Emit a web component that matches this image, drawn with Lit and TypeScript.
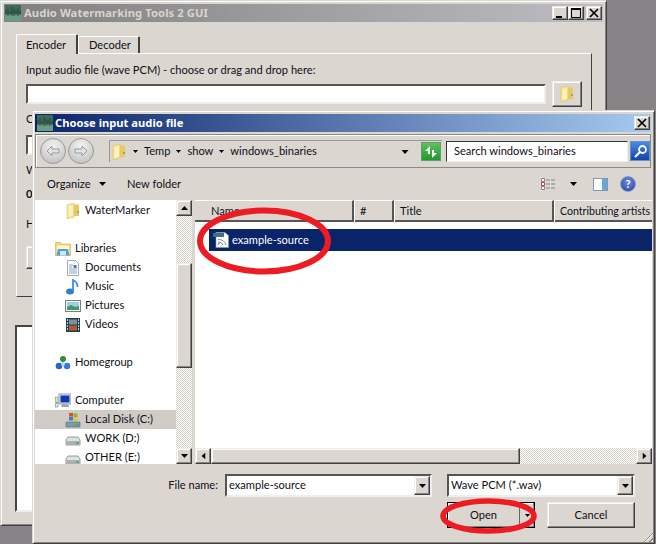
import { LitElement, html, css, svg } from "lit";
import { customElement } from "lit/decorators.js";

const folder = svg`<svg class="ic" viewBox="0 0 14 16"><path d="M1 1.500L8 0v14l-7 2z" fill="#f7e291" stroke="#d8bc60" stroke-width=".5"/><path d="M8 1.500h5V13H8z" fill="#e9c95f"/><path d="M2.500 3L7 2v10.500l-4.500 1.500z" fill="#fdf1bd"/><rect x="11.500" y="8" width="1.200" height="2" fill="#5a86b8"/></svg>`;
const libs = svg`<svg class="ic" viewBox="0 0 16 16"><path d="M.5 1.500h5l1 1.500h9v11.500H.5z" fill="#f2d676" stroke="#c7a94f" stroke-width=".6"/><path d="M2 4.500h12V14H2z" fill="#fff6cf"/><path d="M3 8h10l1.500 6.500h-13z" fill="#4f9fd8"/><path d="M5 10h6v4.500H5z" fill="#cfe6f6"/></svg>`;
const doc = svg`<svg class="ic" viewBox="0 0 16 16"><path d="M2.500.5h8l3 3v12h-11z" fill="#fff" stroke="#8a93a6" stroke-width=".8"/><path d="M4 5h4M4 7h3M4 9h8M4 11h8M4 13h8" stroke="#8fa0b8"/><rect x="8.500" y="5" width="3" height="3" fill="#3a7cc0"/></svg>`;
const music = svg`<svg class="ic" viewBox="0 0 16 16"><ellipse cx="5" cy="12.500" rx="4" ry="3" fill="#2f7fd0"/><path d="M8 12V1c2 1 5 3 4.500 7" fill="none" stroke="#3d8ede" stroke-width="1.800"/></svg>`;
const pics = svg`<svg class="ic" viewBox="0 0 16 16"><rect x=".5" y="2.500" width="15" height="11" fill="#f4f4f4" stroke="#7d7d7d"/><rect x="2" y="4" width="12" height="8" fill="#9bd0e8"/><path d="M2 9l4-2 4 2 4-1v4H2z" fill="#3f9a68"/></svg>`;
const videos = svg`<svg class="ic" viewBox="0 0 16 16"><rect x="1" y="1" width="14" height="14" fill="#22404a"/><rect x="4" y="2.500" width="8" height="5" fill="#7f8fa0"/><rect x="4" y="8.500" width="8" height="5" fill="#b05a38"/><path d="M2 3h1M2 6h1M2 9h1M2 12h1M13 3h1M13 6h1M13 9h1M13 12h1" stroke="#dff" stroke-width="1.500"/></svg>`;
const home = svg`<svg class="ic" viewBox="0 0 16 16"><circle cx="8" cy="4" r="3" fill="#2f8f3f"/><circle cx="4" cy="11" r="3.300" fill="#2f62c4"/><circle cx="12" cy="11" r="3.300" fill="#3a78d8"/><circle cx="8" cy="9" r="2" fill="#bcd4ee"/></svg>`;
const comp = svg`<svg class="ic" viewBox="0 0 16 16"><rect x="4" y="1" width="12" height="10" fill="#dfe6ee" stroke="#5b6d80" stroke-width=".6"/><rect x="5.500" y="2.500" width="9" height="7" fill="#1238b0"/><path d="M7 11h6l1 3H6z" fill="#9aa6b4"/><rect x=".5" y="4" width="2.500" height="10" fill="#dfe6e0" stroke="#6d7a70" stroke-width=".5"/><rect x="1" y="9" width="1.500" height="1.500" fill="#3fb04f"/></svg>`;
const cdisk = svg`<svg class="ic" viewBox="0 0 16 16"><path d="M1 10h14v5H1z" fill="#7d9aa8" stroke="#55707e" stroke-width=".6"/><rect x="11.500" y="12" width="2" height="1.500" fill="#3fb04f"/><rect x="4" y="1" width="4" height="3.500" fill="#d8502c"/><rect x="8.500" y="1.500" width="4" height="3.500" fill="#7cb83c"/><rect x="4" y="5" width="4" height="3.500" fill="#3a7ccc"/><rect x="8.500" y="5.500" width="4" height="3.500" fill="#f0c030"/></svg>`;
const disk = svg`<svg class="ic" viewBox="0 0 16 16"><path d="M3 6h10l2 3v5H1V9z" fill="#dfe2e3" stroke="#7e8488" stroke-width=".8"/><path d="M1 10h14v4H1z" fill="#aab0b3"/><rect x="11.500" y="11" width="2" height="2" fill="#3fb04f"/></svg>`;
const wav = svg`<svg class="ic" viewBox="0 0 16 16"><path d="M3 .5h9l3.500 3v12H3z" fill="#fff" stroke="#8a93a6" stroke-width=".6"/><rect x="0" y="1" width="11" height="4" fill="#3f6f80"/><path d="M5 13a2 2 0 012-2M5 10a5 5 0 015 3M5 7.500a8 8 0 018 5.500" fill="none" stroke="#7c8ca0"/></svg>`;
const arrowDown = svg`<svg class="tri" viewBox="0 0 7 4"><path d="M0 0h7L3.500 4z"/></svg>`;
const logo = svg`<svg class="logo" viewBox="0 0 16 16"><rect width="16" height="16" fill="#3f6a58"/><rect y="9" width="16" height="7" fill="#6c9c86"/><path d="M1 5v5M3 3v8M5 6v4M7 2v9M9 4v7M11 5v5M13 3v8M15 6v4" stroke="#20463a"/></svg>`;
const gridIcon = svg`<svg class="view" viewBox="0 0 15 12"><path d="M.5.5h3v3h-3zM.5 8.500h3v3h-3z" fill="#fff" stroke="#7d8794"/><path d="M5 2h4M10 2h4M5 10h4M10 10h4" stroke="#7d8794"/><path d="M.5 4.500h3v3h-3z" fill="#fff" stroke="#c04040"/><path d="M5 6h4M10 6h4" stroke="#7d8794"/></svg>`;

interface Row { ic?: unknown; t?: string; lv?: number; sel?: boolean }
const rows: Row[] = [
  { ic: folder, t: "WaterMarker", lv: 2 }, {},
  { ic: libs, t: "Libraries", lv: 1 },
  { ic: doc, t: "Documents", lv: 2 },
  { ic: music, t: "Music", lv: 2 },
  { ic: pics, t: "Pictures", lv: 2 },
  { ic: videos, t: "Videos", lv: 2 }, {},
  { ic: home, t: "Homegroup", lv: 1 }, {},
  { ic: comp, t: "Computer", lv: 1 },
  { ic: cdisk, t: "Local Disk (C:)", lv: 2, sel: true },
  { ic: disk, t: "WORK (D:)", lv: 2 },
  { ic: disk, t: "OTHER (E:)", lv: 2 },
];

@customElement("app-root")
export class AppRoot extends LitElement {
  static styles = css`
    :host { display: block; position: relative; width: 656px; height: 544px; overflow: hidden; background: #858385;
      font: 11.1px Lato, sans-serif; color: #101018; }
    * { box-sizing: border-box; }
    .ic { width: 16px; height: 16px; flex: none; display: block; }
    .tri { width: 7px; height: 4px; fill: #000; display: block; flex: none; }
    .raised { background: #dbd6d0; border: 1px solid; border-color: #efebe6 #404040 #404040 #efebe6; box-shadow: inset -1px -1px 0 #858585, inset 1px 1px 0 #fff; }
    .sunken { background: #fff; border: 2px solid; border-color: #555 #eee #eee #555; }
    .window { position: absolute; background: #dbd6d0; border: 1px solid; border-color: #dbd6d0 #404040 #404040 #dbd6d0; box-shadow: inset 1px 1px 0 #fff, inset -1px -1px 0 #858585; display: flex; flex-direction: column; }
    .main { left: 0; top: 0; width: 607px; height: 526px; padding: 3px; }
    .dlg { left: 32px; top: 110px; width: 623px; height: 434px; padding: 3px 3px 2px 2px; }
    .title { height: 18px; flex: none; display: flex; align-items: center; padding: 0 1px; font: 700 11.2px "Noto Sans", sans-serif; color: #fff; }
    .main .title { background: linear-gradient(90deg, #808080, #bdbcc2); color: #d8d4ce; gap: 3px; letter-spacing: .1px; }
    .dlg .title { background: linear-gradient(90deg, #0a246a, #a6caf0); gap: 2px; padding-left: 2px; }
    .logo { width: 16px; height: 16px; flex: none; display: block; }
    .title span { flex: 1; margin-top: -2px; }
    .wb { width: 16px; height: 14px; padding: 0; display: flex; align-items: center; justify-content: center; }
    .wb svg { width: 10px; height: 10px; display: block; }
    .wbs { display: flex; }
    .wbs .x { margin-left: 2px; }
    .mbody { flex: 1; display: flex; flex-direction: column; padding: 12px 11px 0 12px; }
    .tabs { display: flex; height: 19px; align-items: flex-end; flex: none; position: relative; z-index: 1; }
    .tab { border: 1px solid #fff; border-bottom: 0; border-right: 2px solid #404040; border-radius: 2px 2px 0 0; padding: 0 10px 2px; display: flex; align-items: center; height: 17px; width: 62px; background: #dbd6d0; }
    .tab.on { height: 20px; margin-bottom: -1px; padding-left: 9px; padding-bottom: 0; }
    .pane { height: 244px; flex: none; border: 1px solid; border-color: #fff #404040 #404040 #fff; padding: 9px 9px 0 9px; display: flex; flex-direction: column; }
    .lab { height: 16px; line-height: 14px; white-space: nowrap; flex: none; }
    .irow { display: flex; gap: 6px; align-items: center; margin-top: 2px; height: 26px; flex: none; }
    .irow .sunken { height: 20px; width: 520px; }
    .fbtn { width: 30px; height: 26px; display: flex; align-items: center; justify-content: center; }
    .m5 { margin-top: 5px; } .m8 { margin-top: 8px; } .m14 { margin-top: 14px; }
    .stub { width: 100px; height: 20px; margin-top: 7px; flex: none; }
    .stub2 { width: 100px; height: 23px; margin-top: 13px; flex: none; }
    .lbox { margin: 28px 0 0 -1px; height: 187px; width: 577px; border: 2px solid; border-color: #444 #eee #eee #444; background: #fff; flex: none; }
    .navbar { height: 34px; flex: none; margin-top: 2px; border: 1px solid #8a8a8a; box-shadow: inset 1px 1px 0 #fff; display: flex; align-items: center; padding: 0 1px 0 4px; }
    .nb { width: 26px; height: 26px; border-radius: 50%; border: 1px solid #9a9a9a; background: radial-gradient(circle at 50% 30%, #f4f4f4, #b9b9b9); display: flex; align-items: center; justify-content: center; margin-right: 2px; flex: none; }
    .nb svg { width: 16px; height: 12px; display: block; }
    .crumb { margin-left: 13px; width: 333px; height: 22px; flex: none; border-left: 1px solid #999; border-top: 1px solid #999; display: flex; align-items: center; padding-left: 1px; gap: 6px; white-space: nowrap; }
    .crumb .tri { width: 5px; height: 3px; }
    .crumb span { margin-top: -2px; }
    .crumb .gap2 { flex: 1; }
    .crumb .drop { width: 8px; height: 4px; margin-right: 6px; }
    .refresh { width: 20px; height: 19px; background: linear-gradient(#5fc15f, #1d9a2e); border: 1px solid #6a9a6a; flex: none; display: flex; align-items: center; justify-content: center; margin-right: 1px; }
    .refresh svg { width: 16px; height: 14px; display: block; }
    .search { width: 182px; height: 21px; margin-left: 4px; flex: none; background: #fff; border: 1px solid; border-color: #333 #eee #eee #333; padding-left: 7px; line-height: 17px; white-space: nowrap; }
    .sbtn { width: 20px; height: 20px; margin-left: 2px; flex: none; border: 1px solid #6d8fc0; background: linear-gradient(#4a88e8, #0f46b0); display: flex; align-items: center; justify-content: center; }
    .sbtn svg { width: 15px; height: 15px; display: block; }
    .toolbar { height: 32px; flex: none; display: flex; align-items: center; padding: 0 15px 0 12px; white-space: nowrap; }
    .toolbar > span { margin-top: -2px; }
    .org { width: 52px; } .toolbar .nf { margin-left: 21px; }
    .toolbar .sp { flex: 1; }
    .view { width: 15px; height: 12px; display: block; flex: none; margin-right: 14px; }
    .pv { width: 15px; height: 13px; margin: 0 12px 0 16px; flex: none; border: 1px solid #7f99b5; background: linear-gradient(90deg, #fff 60%, #6ba7d8 60%); }
    .help { width: 16px; height: 16px; border-radius: 50%; background: radial-gradient(circle at 50% 35%, #6f8ee8, #1f3f9f); border: 1px solid #8d9bb8; color: #fff; font-weight: 700; font-size: 11px; line-height: 14px; text-align: center; flex: none; }
    .mid { height: 264px; flex: none; display: flex; margin-right: -1px; }
    .tree { width: 141px; background: #fff; overflow: hidden; flex: none; padding-top: 1px; }
    .r { height: 19px; display: flex; align-items: center; white-space: nowrap; gap: 4px; }
    .r span { margin-top: -2px; }
    .r.l1 { padding-left: 20px; }
    .r.l2 { padding-left: 30px; }
    .r.sel { background: #d0cbc5; }
    .vsb { width: 16px; flex: none; display: flex; flex-direction: column; }
    .chk { background: repeating-conic-gradient(#fff 0 25%, #d4d0c8 0 50%) 0 0 / 2px 2px; }
    .sb { width: 16px; height: 16px; flex: none; display: flex; align-items: center; justify-content: center; }
    .left { transform: rotate(90deg); } .right { transform: rotate(-90deg); } .up { transform: rotate(180deg); }
    .vt1 { height: 47px; flex: none; } .vth { height: 105px; flex: none; } .vt2 { flex: 1; }
    .list { margin-left: 3px; flex: 1; display: flex; flex-direction: column; background: #fff; min-width: 0; }
    .hdr { height: 22px; flex: none; display: flex; white-space: nowrap; overflow: hidden; }
    .col { flex: none; height: 22px; background: #dbd6d0; border-top: 1px solid #fff; border-bottom: 2px solid #555; border-right: 2px solid; border-right-color: #555; display: flex; align-items: center; padding-left: 5px; box-shadow: 1px 0 0 #fff; margin-right: 1px; }
    .c1 { width: 159px; padding-left: 16px; } .c2 { width: 39px; } .c3 { width: 159px; } .c4 { width: 97px; border-right: 0; padding-left: 5px; margin-right: 0; font-size: 10.600px; }
    .items { flex: 1; padding: 7px 0 0 14px; min-height: 0; }
    .item { height: 22px; background: #0a246a; color: #fff; display: flex; align-items: center; gap: 3px; padding-left: 4px; }
    .item span { margin-top: -2px; }
    .hsb { height: 16px; flex: none; display: flex; }
    .hth { width: 309px; height: 16px; flex: none; }
    .ht { flex: 1; }
    .foot { flex: 1; display: grid; grid-template-columns: 190px 207px 15px 188px; grid-template-rows: 23px 26px; row-gap: 5px; padding-top: 10px; align-content: start; }
    .fl { text-align: right; padding-right: 7px; line-height: 21px; }
    .cb { display: flex; align-items: stretch; background: #fff; border: 2px solid; border-color: #555 #eee #eee #555; }
    .cb .v { flex: 1; padding-left: 2px; line-height: 18px; white-space: nowrap; }
    .dd { width: 16px; flex: none; display: flex; align-items: center; justify-content: center; }
    .btns { grid-column: 4; display: flex; justify-content: space-between; }
    .btn { display: flex; align-items: center; justify-content: center; height: 26px; width: 88px; padding-bottom: 2px; }
    .open { border-color: #000; box-shadow: inset -1px -1px 0 #858585, inset 1px 1px 0 #fff; padding-bottom: 0; }
    .open .l { flex: 1; text-align: center; margin-top: -2px; }
    .open .sp { width: 15px; height: 100%; border-left: 1px solid #666; display: flex; align-items: center; justify-content: center; }
    .open .tri { width: 5px; height: 3px; }
    .grip { position: absolute; right: 1px; bottom: 1px; width: 12px; height: 12px; background: repeating-linear-gradient(135deg, #dbd6d0 0 2px, #888 2px 3px, #fff 3px 4px); clip-path: polygon(100% 0, 100% 100%, 0 100%); }
    .marks { position: absolute; left: 0; top: 0; width: 656px; height: 544px; pointer-events: none; display: block; }
  `;

  private win(kind: string) {
    return html`<div class="wbs">${kind === "main" ? html`
      <div class="raised wb"><svg viewBox="0 0 10 10"><path d="M1 8h6v2H1z"/></svg></div>
      <div class="raised wb"><svg viewBox="0 0 10 10"><path d="M.5 1.500h9v8h-9z" fill="none" stroke="#000"/><path d="M0 1h10" stroke="#000" stroke-width="2"/></svg></div>` : ""}
      <div class="raised wb x"><svg viewBox="0 0 10 10"><path d="M1 1l8 8M9 1l-8 8" stroke="#000" stroke-width="1.700"/></svg></div></div>`;
  }

  render() {
    return html`
      <div class="window main">
        <div class="title">${logo}<span>Audio Watermarking Tools 2 GUI</span>${this.win("main")}</div>
        <div class="mbody">
          <div class="tabs"><div class="tab on">Encoder</div><div class="tab">Decoder</div></div>
          <div class="pane">
            <div class="lab">Input audio file (wave PCM) - choose or drag and drop here:</div>
            <div class="irow"><div class="sunken"></div><div class="raised fbtn">${folder}</div></div>
            <div class="lab m5">C</div>
            <div class="sunken stub"></div>
            <div class="lab m8">W</div>
            <div class="lab m8"><b>0</b></div>
            <div class="lab m14">H</div>
            <div class="raised stub2"></div>
          </div>
          <div class="lbox"></div>
        </div>
      </div>
      <div class="window dlg">
        <div class="title">${logo}<span>Choose input audio file</span>${this.win("dlg")}</div>
        <div class="navbar">
          <div class="nb"><svg viewBox="0 0 16 12"><path d="M7 1L2 6l5 5V8h7V4H7z" fill="#e4e4e4" stroke="#9a9a9a"/></svg></div>
          <div class="nb"><svg viewBox="0 0 16 12"><path d="M9 1l5 5-5 5V8H2V4h7z" fill="#e4e4e4" stroke="#9a9a9a"/></svg></div>
          <div class="crumb">${folder}${arrowDown}<span>Temp</span>${arrowDown}<span>show</span>${arrowDown}<span>windows_binaries</span><span class="gap2"></span>
            <svg class="tri drop" viewBox="0 0 7 4"><path d="M0 0h7L3.500 4z"/></svg>
            <div class="refresh"><svg viewBox="0 0 16 14"><path d="M7 1L2 6h3v3h2zM9 13l5-5h-3V5H9z" fill="#fff"/></svg></div></div>
          <div class="search">Search windows_binaries</div>
          <div class="sbtn"><svg viewBox="0 0 15 15"><circle cx="9.500" cy="5.500" r="3.500" fill="none" stroke="#fff" stroke-width="1.800"/><path d="M7 8l-5 5" stroke="#fff" stroke-width="2.200"/></svg></div>
        </div>
        <div class="toolbar"><span class="org">Organize</span>${arrowDown}<span class="nf">New folder</span><span class="sp"></span>${gridIcon}${arrowDown}<div class="pv"></div><div class="help">?</div></div>
        <div class="mid">
          <div class="tree">${rows.map((r) => r.t ? html`<div class="r l${r.lv} ${r.sel ? "sel" : ""}">${r.ic}<span>${r.t}</span></div>` : html`<div class="r"></div>`)}</div>
          <div class="vsb">
            <div class="raised sb"><span class="up">${arrowDown}</span></div>
            <div class="chk vt1"></div><div class="raised vth"></div><div class="chk vt2"></div>
            <div class="raised sb">${arrowDown}</div>
          </div>
          <div class="list">
            <div class="hdr"><div class="col c1">Name</div><div class="col c2">#</div><div class="col c3">Title</div><div class="col c4">Contributing artists</div></div>
            <div class="items"><div class="item">${wav}<span>example-source</span></div></div>
            <div class="hsb">
              <div class="raised sb"><span class="left">${arrowDown}</span></div>
              <div class="raised hth"></div><div class="chk ht"></div>
              <div class="raised sb"><span class="right">${arrowDown}</span></div>
            </div>
          </div>
        </div>
        <div class="foot">
          <div class="fl">File name:</div>
          <div class="cb"><div class="v">example-source</div><div class="raised dd">${arrowDown}</div></div>
          <div></div>
          <div class="cb"><div class="v">Wave PCM (*.wav)</div><div class="raised dd">${arrowDown}</div></div>
          <div class="btns">
            <div class="raised btn open"><span class="l">Open</span><span class="sp">${arrowDown}</span></div>
            <div class="raised btn">Cancel</div>
          </div>
        </div>
        <div class="grip"></div>
      </div>
      <svg class="marks" viewBox="0 0 656 544">
        <ellipse cx="264" cy="241" rx="64" ry="30.500" fill="none" stroke="#ec1c24" stroke-width="6"/>
        <ellipse cx="488.500" cy="516" rx="45.500" ry="15" fill="none" stroke="#ec1c24" stroke-width="5.500"/>
      </svg>
    `;
  }
}
